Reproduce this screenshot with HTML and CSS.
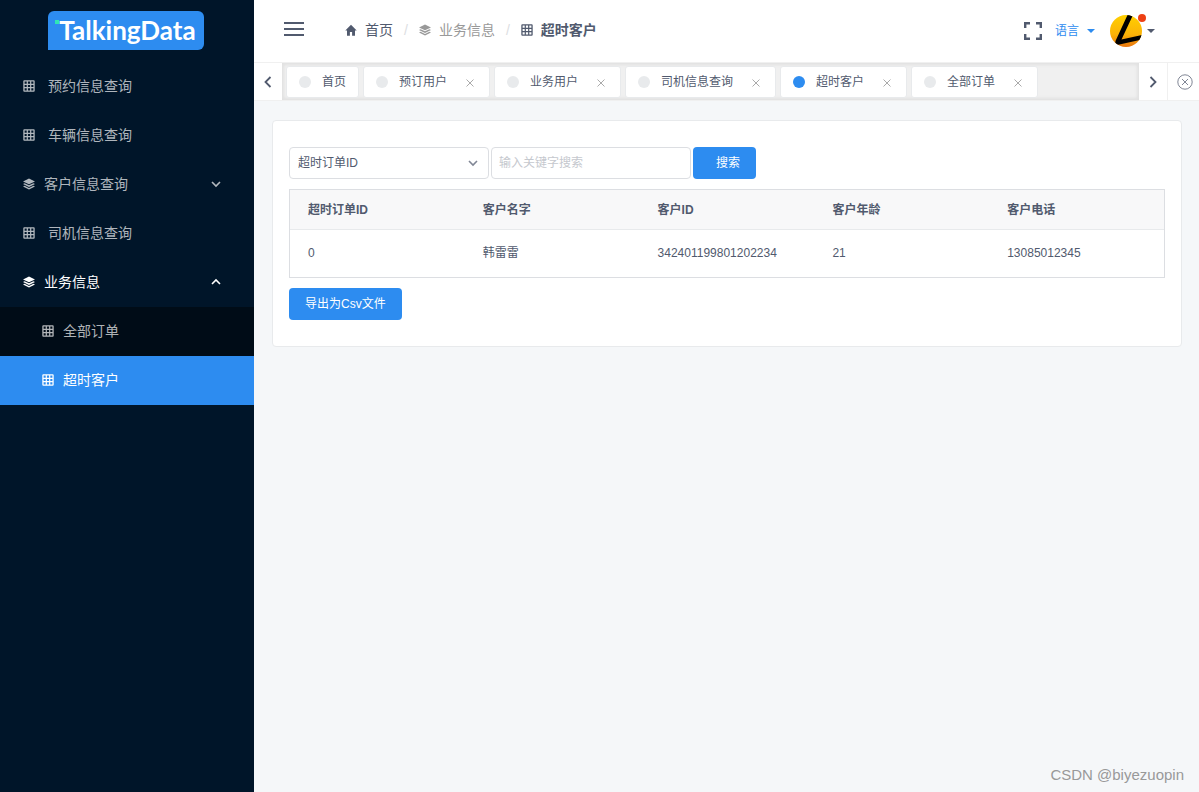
FILE: index.html
```html
<!DOCTYPE html>
<html lang="zh-CN">
<head>
<meta charset="utf-8">
<title>超时客户</title>
<link rel="stylesheet" href="styles.css">
</head>
<body>
<svg class="sprite" aria-hidden="true">
  <symbol id="grid" viewBox="0 0 12 12"><path fill="currentColor" fill-rule="evenodd" d="M1.300.3h9.400a1 1 0 0 1 1 1v9.400a1 1 0 0 1-1 1H1.300a1 1 0 0 1-1-1V1.300a1 1 0 0 1 1-1zM1.600 1.600v2.100h2.100V1.600zM4.900 1.600v2.100h2.200V1.600zM8.300 1.600v2.100h2.100V1.600zM1.600 4.900v2.200h2.100V4.900zM4.900 4.900v2.200h2.200V4.900zM8.300 4.900v2.200h2.100V4.900zM1.600 8.300v2.100h2.100V8.300zM4.900 8.300v2.100h2.200V8.300zM8.300 8.300v2.100h2.100V8.300z"/></symbol>
  <symbol id="layers" viewBox="0 0 12 12"><path fill="currentColor" d="M6 .5 12 3.400 6 6.300 0 3.400zM1.600 5.200 6 7.300l4.400-2.100L12 6 6 8.900 0 6zM1.600 7.800 6 9.900l4.400-2.100 1.600.8-6 2.900-6-2.900z"/></symbol>
  <symbol id="home" viewBox="0 0 12 12"><path fill="currentColor" d="M6 .8.3 6.500H2V11.700h2.900V8h2.200v3.700H10V6.500h1.700z"/></symbol>
  <symbol id="down" viewBox="0 0 10 10"><path fill="none" stroke="currentColor" stroke-width="1.600" d="m1 3 4 4 4-4"/></symbol>
  <symbol id="up" viewBox="0 0 10 10"><path fill="none" stroke="currentColor" stroke-width="1.600" d="m1 7 4-4 4 4"/></symbol>
  <symbol id="caret" viewBox="0 0 8 4"><path fill="currentColor" d="M0 0h8L4 4z"/></symbol>
  <symbol id="cross" viewBox="0 0 8 8"><path fill="none" stroke="currentColor" d="m.5.5 7 7m0-7-7 7"/></symbol>
</svg>
<div class="layout">
  <aside class="sidebar">
    <a class="logo" href="#"><span class="logo-plate">TalkingData</span></a>
    <nav class="menu">
      <a class="menu-item" href="#"><svg class="icon"><use href="#grid"/></svg>预约信息查询</a>
      <a class="menu-item" href="#"><svg class="icon"><use href="#grid"/></svg>车辆信息查询</a>
      <button class="menu-item menu-group" type="button"><svg class="icon"><use href="#layers"/></svg>客户信息查询<svg class="arrow"><use href="#down"/></svg></button>
      <a class="menu-item" href="#"><svg class="icon"><use href="#grid"/></svg>司机信息查询</a>
      <button class="menu-item menu-group open" type="button"><svg class="icon"><use href="#layers"/></svg>业务信息<svg class="arrow"><use href="#up"/></svg></button>
      <div class="submenu">
        <a class="menu-item sub" href="#"><svg class="icon"><use href="#grid"/></svg>全部订单</a>
        <a class="menu-item sub active" href="#"><svg class="icon"><use href="#grid"/></svg>超时客户</a>
      </div>
    </nav>
  </aside>
  <div class="main">
    <header class="header">
      <button class="plain toggle" type="button" aria-label="菜单"><svg class="burger" viewBox="0 0 20 14"><path fill="none" stroke="currentColor" stroke-width="2" d="M0 1h20M0 7h20M0 13h20"/></svg></button>
      <nav class="crumbs">
        <a class="crumb" href="#"><svg class="icon"><use href="#home"/></svg>首页</a>
        <span class="slash">/</span>
        <span class="crumb muted"><svg class="icon"><use href="#layers"/></svg>业务信息</span>
        <span class="slash">/</span>
        <span class="crumb current"><svg class="icon"><use href="#grid"/></svg>超时客户</span>
      </nav>
      <div class="tools">
        <button class="plain" type="button" aria-label="全屏"><svg class="full" viewBox="0 0 18 18"><path fill="none" stroke="currentColor" stroke-width="2.400" d="M1.200 6V1.200H6M12 1.200h4.800V6M16.800 12v4.800H12M6 16.800H1.200V12"/></svg></button>
        <button class="plain lang" type="button">语言<svg class="caret"><use href="#caret"/></svg></button>
        <button class="plain user" type="button" aria-label="用户">
          <span class="avatar">
            <svg class="face" viewBox="0 0 32 32"><defs><linearGradient id="gold" x2="0" y2="1"><stop stop-color="#ffd000"/><stop offset=".6" stop-color="#fbb307"/><stop offset="1" stop-color="#e8750f"/></linearGradient><clipPath id="round"><circle cx="16" cy="16" r="16"/></clipPath></defs><g clip-path="url(#round)"><path fill="url(#gold)" d="M0 0h32v32H0z"/><path d="M17.500 0H23L11.500 24.500 32 20v4.500L5 30.500l.5-4.500z"/></g></svg>
            <i class="badge"></i>
          </span>
          <svg class="caret"><use href="#caret"/></svg>
        </button>
      </div>
    </header>
    <div class="tabbar">
      <button class="plain scroll" type="button" aria-label="向左"><svg viewBox="0 0 8 12"><path fill="none" stroke="currentColor" stroke-width="1.800" d="M6.500 1 1.500 6l5 5"/></svg></button>
      <div class="tabs">
        <div class="tab"><i class="dot"></i>首页</div>
        <div class="tab"><i class="dot"></i>预订用户<button class="plain close" type="button" aria-label="关闭"><svg><use href="#cross"/></svg></button></div>
        <div class="tab"><i class="dot"></i>业务用户<button class="plain close" type="button" aria-label="关闭"><svg><use href="#cross"/></svg></button></div>
        <div class="tab"><i class="dot"></i>司机信息查询<button class="plain close" type="button" aria-label="关闭"><svg><use href="#cross"/></svg></button></div>
        <div class="tab"><i class="dot on"></i>超时客户<button class="plain close" type="button" aria-label="关闭"><svg><use href="#cross"/></svg></button></div>
        <div class="tab"><i class="dot"></i>全部订单<button class="plain close" type="button" aria-label="关闭"><svg><use href="#cross"/></svg></button></div>
      </div>
      <button class="plain scroll" type="button" aria-label="向右"><svg viewBox="0 0 8 12"><path fill="none" stroke="currentColor" stroke-width="1.800" d="m1.500 1 5 5-5 5"/></svg></button>
      <button class="plain close-all" type="button" aria-label="关闭全部"><svg viewBox="0 0 16 16"><g fill="none" stroke="currentColor"><circle cx="8" cy="8" r="7.200"/><path d="m5 5 6 6m0-6-6 6"/></g></svg></button>
    </div>
    <main class="content">
      <section class="card">
        <form class="search">
          <div class="select">
            <select aria-label="搜索字段"><option>超时订单ID</option><option>客户名字</option><option>客户ID</option></select>
            <svg class="arrow"><use href="#down"/></svg>
          </div>
          <input class="keyword" type="text" placeholder="输入关键字搜索" aria-label="关键字">
          <button class="btn find" type="button">搜索</button>
        </form>
        <table class="table">
          <thead><tr><th>超时订单ID</th><th>客户名字</th><th>客户ID</th><th>客户年龄</th><th>客户电话</th></tr></thead>
          <tbody><tr><td>0</td><td>韩雷雷</td><td>342401199801202234</td><td>21</td><td>13085012345</td></tr></tbody>
        </table>
        <button class="btn" type="button">导出为Csv文件</button>
      </section>
    </main>
    <footer class="mark">CSDN @biyezuopin</footer>
  </div>
</div>
</body>
</html>
```

FILE: styles.css
```css
* { box-sizing: border-box; }
body {
  margin: 0;
  font: 12px/18px "Liberation Sans", "Noto Sans CJK SC", sans-serif;
  color: #515a6e;
  background: #f5f7f9;
}
button, input, select { font: inherit; color: inherit; }
a { color: inherit; text-decoration: none; }
svg { display: block; flex: none; }
.sprite { position: absolute; width: 0; height: 0; }
.plain { display: flex; align-items: center; padding: 0; border: 0; background: none; }
.icon { width: 12px; height: 12px; }
.arrow { width: 10px; height: 10px; }
.caret { width: 8px; height: 4px; }

.layout { display: flex; min-height: 100vh; }
.sidebar { flex: none; width: 254px; background: #001529; }
.logo { display: flex; align-items: center; justify-content: center; height: 62px; padding: 0 2px 2px 0; }
.logo-plate {
  padding: 0 8px 0 11px;
  border-radius: 6px 6px 6px 0;
  background: linear-gradient(#2fe6b4, #2fe6b4) 7px 9px / 4px 4px no-repeat #2d8cf0;
  color: #fff;
  font: bold 26px/39px Lato, sans-serif;
}
.menu-item {
  display: flex;
  align-items: center;
  gap: 13px;
  width: 100%;
  height: 49px;
  padding: 0 33px 2px 23px;
  border: 0;
  background: none;
  color: rgba(255, 255, 255, .7);
  font-size: 14px;
  text-align: left;
}
.menu-group { gap: 9px; }
.menu-group .arrow { margin-left: auto; }
.open { color: #fff; }
.submenu { background: #000c17; }
.sub { gap: 9px; padding-left: 42px; }
.active { background: #2d8cf0; color: #fff; }

.main { flex: 1; display: flex; flex-direction: column; min-width: 0; }
.header { display: flex; align-items: center; height: 62px; padding: 0 44px 0 30px; background: #fff; }
.toggle { padding-bottom: 4px; }
.burger { width: 20px; height: 14px; }
.crumbs { display: flex; align-items: center; gap: 11px; margin-left: 41px; padding-bottom: 2px; font-size: 14px; }
.crumb { display: flex; align-items: center; gap: 8px; }
.muted { color: #999; }
.current { font-weight: bold; }
.slash { color: #dcdee2; }
.tools { display: flex; align-items: center; gap: 13px; margin-left: auto; }
.full { width: 18px; height: 18px; }
.lang { gap: 8px; color: #2d8cf0; }
.user { gap: 5px; margin-left: 2px; }
.avatar { position: relative; }
.face { width: 32px; height: 32px; }
.badge { position: absolute; top: -1px; right: -4px; width: 8px; height: 8px; border-radius: 50%; background: #ed4014; }

.tabbar { display: flex; height: 39px; border: solid #f0f0f0; border-width: 1px 0; background: #fff; }
.scroll { justify-content: center; width: 28px; }
.scroll svg { width: 8px; height: 12px; }
.close-all { justify-content: center; width: 32px; padding-left: 2px; border-left: 1px solid #f0f0f0; color: #808695; }
.close-all svg { width: 16px; height: 16px; }
.tabs {
  flex: 1;
  display: flex;
  align-items: center;
  gap: 4px;
  min-width: 0;
  padding: 0 4px;
  overflow: hidden;
  background: #f0f0f0;
  box-shadow: inset 0 0 3px 2px rgba(100, 100, 100, .1);
}
.tab {
  display: flex;
  align-items: center;
  height: 32px;
  padding: 0 12px;
  border: 1px solid #e8eaec;
  border-radius: 3px;
  background: #fff;
  white-space: nowrap;
}
.dot { width: 12px; height: 12px; margin-right: 11px; border-radius: 50%; background: #e8eaec; }
.on { background: #2d8cf0; }
.close { padding: 2px 3px 0 19px; color: #aaa; }
.close svg { width: 8px; height: 8px; }

.content { flex: 1; padding: 19px 17px 18px 18px; }
.card { padding: 26px 16px; border: 1px solid #e8eaec; border-radius: 4px; background: #fff; }
.search { display: flex; gap: 2px; }
.select { position: relative; width: 200px; }
.select select, .keyword {
  width: 200px;
  height: 32px;
  padding: 0 8px;
  border: 1px solid #dcdee2;
  border-radius: 4px;
  background: #fff;
  appearance: none;
}
.select .arrow { position: absolute; top: 11px; right: 11px; color: #808695; }
.keyword { padding: 0 7px; }
.keyword::placeholder { color: #c5c8ce; }
.btn { height: 32px; padding: 0 16px; border: 0; border-radius: 4px; background: #2d8cf0; color: #fff; }
.find { padding-left: 23px; }
.table {
  width: 100%;
  margin: 10px 0;
  border: 1px solid #dcdee2;
  border-spacing: 0;
  table-layout: fixed;
}
.table th, .table td { padding: 0 18px; text-align: left; }
.table th { height: 40px; border-bottom: 1px solid #e8eaec; background: #f8f8f9; }
.table td { height: 47px; padding-bottom: 2px; }
.mark { padding: 0 15px 8px; color: #999; font-size: 15px; text-align: right; }
```
